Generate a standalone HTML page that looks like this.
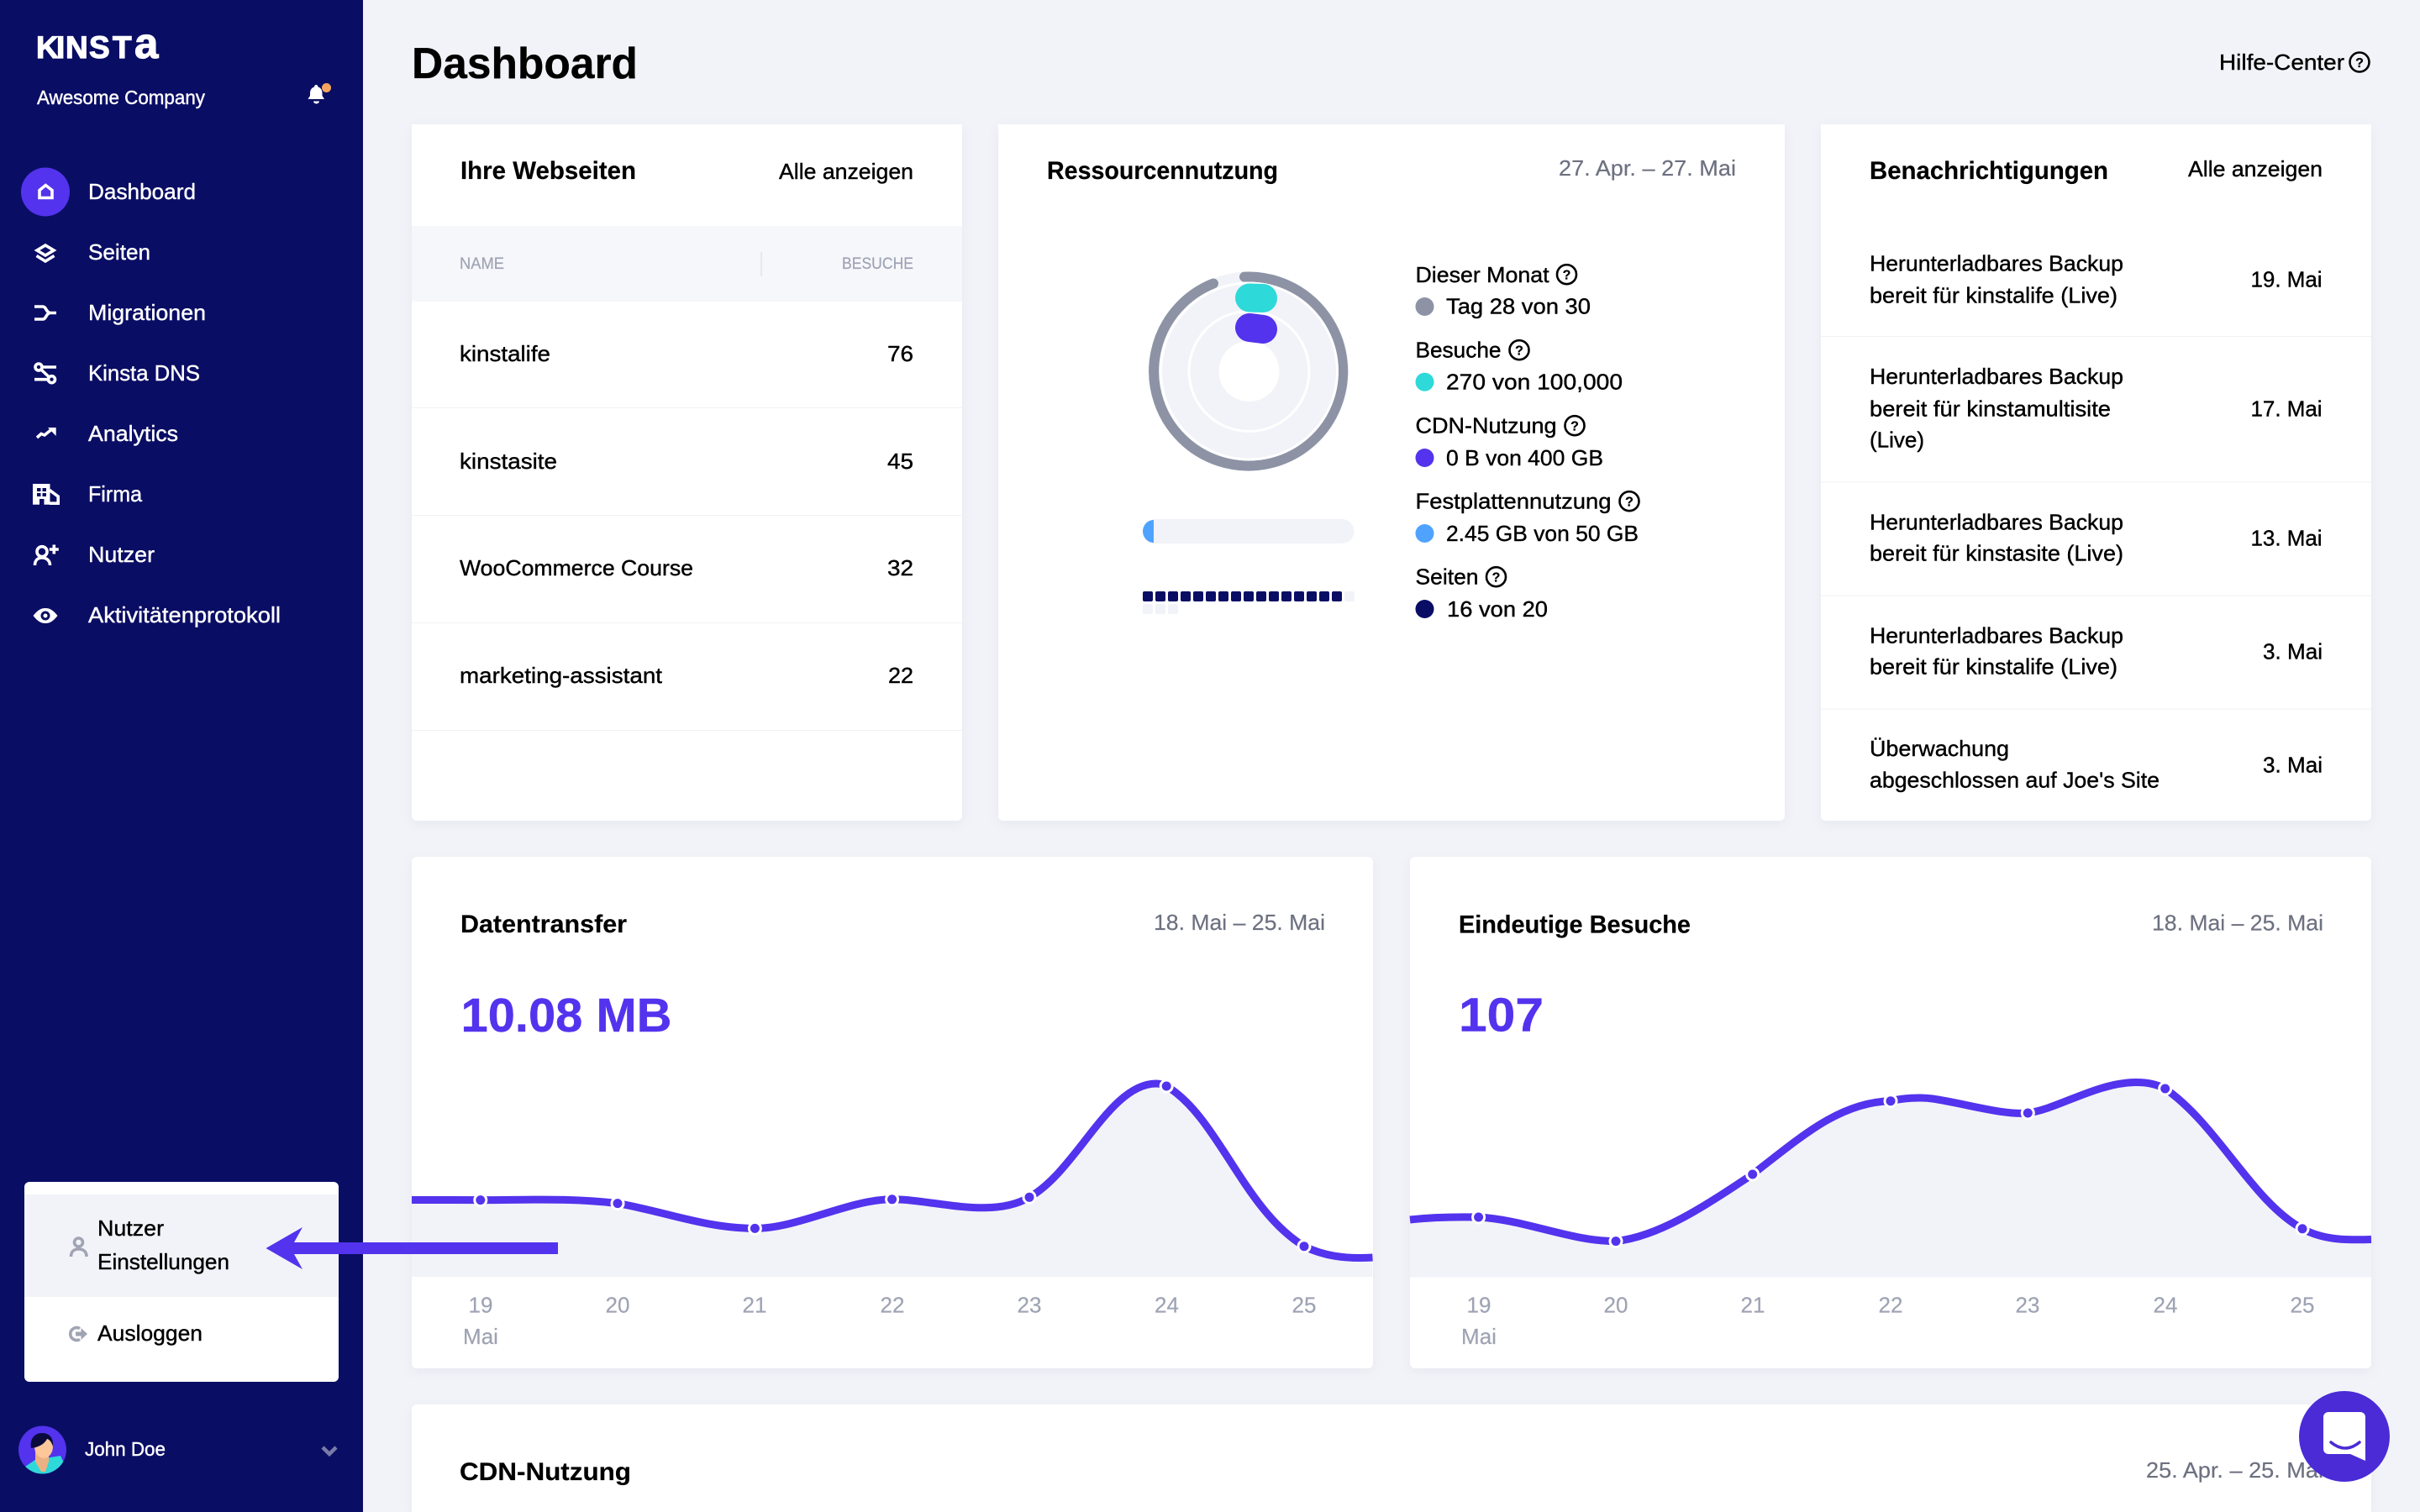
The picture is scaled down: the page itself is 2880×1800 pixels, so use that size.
<!DOCTYPE html>
<html lang="de">
<head>
<meta charset="utf-8">
<title>Kinsta Dashboard</title>
<style>
html,body{margin:0;padding:0;width:2880px;height:1800px;overflow:hidden;background:#f2f3f8;font-family:"Liberation Sans",sans-serif}
.page{position:relative;width:2880px;height:1800px;overflow:hidden;background:#f2f3f8}
.side{position:absolute;left:0;top:0;width:432px;height:1800px;background:#0a0d64}
.card{position:absolute;background:#fff;box-shadow:0 4px 14px rgba(110,120,170,.08)}
svg{position:absolute;left:0;top:0;display:block}
text{font-family:"Liberation Sans",sans-serif;font-size:26px;fill:#000;stroke:#000;stroke-width:.4}
.w{fill:#fff;stroke:#fff}
.h{font-weight:bold;font-size:30px;stroke-width:.2}
.d{fill:#6d7180;stroke:#6d7180;stroke-width:.2}
.l{fill:#9ea3b3;stroke:#9ea3b3;stroke-width:.2;text-anchor:middle}
.c{fill:#5333ed;stroke:#5333ed;font-weight:bold;font-size:57px}
.s{font-size:19px;fill:#9ea3b3;stroke:#9ea3b3;stroke-width:.2}
.q{font-size:16px;font-weight:bold;text-anchor:middle;stroke-width:.2}
.qc{fill:none;stroke:#000;stroke-width:2.6}
.i{fill:none;stroke:#fff;stroke-width:3.600}
.ln{fill:none;stroke:#5333ed;stroke-width:9}
.pt{fill:#5333ed;stroke:#fff;stroke-width:3}
</style>
</head>
<body>
<div class="page">
<div class="side"></div>
<div class="card" style="left:490px;top:148px;width:655px;height:829px;border-radius:0 0 6px 6px"></div>
<div class="card" style="left:1188px;top:148px;width:936px;height:829px;border-radius:0 0 6px 6px"></div>
<div class="card" style="left:2167px;top:148px;width:655px;height:829px;border-radius:0 0 6px 6px"></div>
<div class="card" style="left:490px;top:1020px;width:1144px;height:609px;border-radius:6px"></div>
<div class="card" style="left:1678px;top:1020px;width:1144px;height:609px;border-radius:6px"></div>
<div class="card" style="left:490px;top:1672px;width:2332px;height:128px;border-radius:6px 6px 0 0"></div>

<svg width="2880" height="1800" viewBox="0 0 2880 1800" xmlns="http://www.w3.org/2000/svg">
<!-- logo -->
<text class="w" y="69" x="43 67 78 106 134" style="font-size:37px;font-weight:bold;stroke-width:1.2">KINST<tspan x="160" style="font-size:51px">a</tspan></text>
<text class="w" x="44" y="124" textLength="200" lengthAdjust="spacingAndGlyphs" style="font-size:23px">Awesome Company</text>
<!-- bell -->
<path fill="#fff" d="M376.5,101c-1.5,0-2.5,1-2.5,2.5c-3.5,1-5,4-5,7.5v3l-2.500,4h19.500l-2.500,-4v-3c0,-3.500-1.500,-6.500-5,-7.500c0,-1.500-1,-2.500-2.500,-2.500z"/>
<path fill="#fff" d="M373,120.500a3.500,3 0 0 0 7,0z"/>
<circle cx="388.500" cy="104.500" r="5.500" fill="#f6a55e"/>
<!-- nav -->
<circle cx="54" cy="228.500" r="29" fill="#5333ed"/>
<path class="i" d="M47,235.500V226.500L54.300,220.500L62,226.500V235.500Z"/>
<path class="i" d="M44,298L54,292L64,298L54,304Z"/>
<path class="i" d="M43.500,304.500L54,311L64.500,304.500"/>
<path class="i" d="M41,365H51C55,365 55,372.500 60,372.500H67M60,372.500C55,372.500 55,380 51,380H41"/>
<circle class="i" cx="46" cy="437" r="4"/><circle class="i" cx="61.500" cy="451.700" r="4"/>
<path class="i" d="M51,437H67M41,451.700H57.500M49,440L58.500,449"/>
<path class="i" d="M44,521L49,516.500L53,518L61,511.500"/>
<path fill="#fff" d="M57,509H66.700V519Z"/>
<rect x="39" y="576" width="20.500" height="24.700" fill="#fff"/>
<path fill="#0a0d64" d="M44,581h4.500v4h-4.500zM50.500,581h4.500v4h-4.500zM44,587h4.500v4h-4.500zM50.500,587h4.500v4h-4.500zM47,594h5.500v7h-5.500z"/>
<path class="i" d="M59,583.500L69.200,591V599.200H59"/>
<circle class="i" cx="50" cy="656.700" r="6"/>
<path class="i" d="M41.500,673C41.500,667 45,664 50,664S59.500,667 59.500,673"/>
<path class="i" d="M64.300,648.500V659.500M58.800,654H69.800"/>
<path fill="#fff" d="M39.500,733C45,726 49,724 54,724S63,726 68.500,733C63,740 59,742 54,742S45,740 39.500,733Z"/>
<circle cx="54" cy="733" r="5.500" fill="#0a0d64"/><circle cx="54" cy="733" r="2.500" fill="#fff"/>
<text class="w" x="105" y="237" textLength="128" lengthAdjust="spacingAndGlyphs">Dashboard</text>
<text class="w" x="105" y="309" textLength="74" lengthAdjust="spacingAndGlyphs">Seiten</text>
<text class="w" x="105" y="381" textLength="140" lengthAdjust="spacingAndGlyphs">Migrationen</text>
<text class="w" x="105" y="453" textLength="133" lengthAdjust="spacingAndGlyphs">Kinsta DNS</text>
<text class="w" x="105" y="525" textLength="107" lengthAdjust="spacingAndGlyphs">Analytics</text>
<text class="w" x="105" y="597" textLength="64" lengthAdjust="spacingAndGlyphs">Firma</text>
<text class="w" x="105" y="669" textLength="79" lengthAdjust="spacingAndGlyphs">Nutzer</text>
<text class="w" x="105" y="741" textLength="229" lengthAdjust="spacingAndGlyphs">Aktivitätenprotokoll</text>

<!-- popup -->
<rect x="29" y="1407" width="374" height="238" rx="6" fill="#fff"/>
<rect x="29" y="1422" width="374" height="122" fill="#f2f3f8"/>
<circle cx="93.500" cy="1479" r="5" fill="none" stroke="#a0a4b3" stroke-width="3.600"/>
<path fill="none" stroke="#a0a4b3" stroke-width="3.600" d="M84.500,1496C84.500,1490 88,1487 93.500,1487S103,1490 103,1496"/>
<path fill="none" stroke="#a0a4b3" stroke-width="3.600" d="M95,1581.500A7.500,7.500 0 1 0 95,1594.500"/>
<path fill="#a0a4b3" d="M90,1585.500H96.500V1581L104,1588L96.500,1595V1590.500H90Z"/>
<text x="116" y="1471" textLength="79" lengthAdjust="spacingAndGlyphs">Nutzer</text>
<text x="116" y="1511" textLength="157" lengthAdjust="spacingAndGlyphs">Einstellungen</text>
<text x="116" y="1596" textLength="125" lengthAdjust="spacingAndGlyphs">Ausloggen</text>

<!-- user -->
<defs><clipPath id="av"><circle cx="50.500" cy="1726" r="28.500"/></clipPath></defs>
<circle cx="50.500" cy="1726" r="28.500" fill="#5333ed"/>
<g clip-path="url(#av)">
<path fill="#2ed9d9" d="M30,1746L46,1735H60L72,1733L80,1750V1760H30Z"/>
<path fill="#ecb183" d="M42,1726H58V1740L54,1752H49L42,1740Z"/>
<ellipse cx="52" cy="1722" rx="11" ry="14" fill="#fdc79a"/>
<path fill="#0a0a3c" d="M37,1724C35,1712 42,1706 50,1706C59,1706 64,1712 63,1722C61,1716 59,1714 56,1713C53,1719 46,1723 37,1724Z"/>
</g>
<text class="w" x="101" y="1733" textLength="96" lengthAdjust="spacingAndGlyphs" style="font-size:23px">John Doe</text>
<path fill="none" stroke="#7a7ba8" stroke-width="4.500" d="M384,1723L392,1731L400,1723"/>

<!-- header -->
<text x="490" y="93" textLength="269" lengthAdjust="spacingAndGlyphs" style="font-size:52px;font-weight:bold;stroke-width:.3">Dashboard</text>
<text x="2641" y="83" textLength="149" lengthAdjust="spacingAndGlyphs">Hilfe-Center</text>
<circle class="qc" cx="2808" cy="74" r="11.500"/><text class="q" x="2808" y="80">?</text>

<!-- card 1 -->
<text class="h" x="548" y="213" textLength="209" lengthAdjust="spacingAndGlyphs">Ihre Webseiten</text>
<text x="927" y="213" textLength="160" lengthAdjust="spacingAndGlyphs">Alle anzeigen</text>
<rect x="490" y="269" width="655" height="90" fill="#f6f7fb"/>
<text class="s" x="547" y="320" textLength="53" lengthAdjust="spacingAndGlyphs">NAME</text>
<text class="s" x="1002" y="320" textLength="85" lengthAdjust="spacingAndGlyphs">BESUCHE</text>
<rect x="905" y="300" width="2" height="29" fill="#e6e8ef"/>
<text x="547" y="430" textLength="108" lengthAdjust="spacingAndGlyphs">kinstalife</text>
<text x="1056" y="430" textLength="31" lengthAdjust="spacingAndGlyphs">76</text>
<rect x="490" y="485" width="655" height="1" fill="#f1f2f6"/>
<text x="547" y="558" textLength="116" lengthAdjust="spacingAndGlyphs">kinstasite</text>
<text x="1056" y="558" textLength="31" lengthAdjust="spacingAndGlyphs">45</text>
<rect x="490" y="613" width="655" height="1" fill="#f1f2f6"/>
<text x="547" y="685" textLength="278" lengthAdjust="spacingAndGlyphs">WooCommerce Course</text>
<text x="1056" y="685" textLength="31" lengthAdjust="spacingAndGlyphs">32</text>
<rect x="490" y="741" width="655" height="1" fill="#f1f2f6"/>
<text x="547" y="813" textLength="241" lengthAdjust="spacingAndGlyphs">marketing-assistant</text>
<text x="1057" y="813" textLength="30" lengthAdjust="spacingAndGlyphs">22</text>
<rect x="490" y="869" width="655" height="1" fill="#f1f2f6"/>

<!-- card 2 -->
<text class="h" x="1246" y="213" textLength="275" lengthAdjust="spacingAndGlyphs">Ressourcennutzung</text>
<text class="d" x="1855" y="209" textLength="211" lengthAdjust="spacingAndGlyphs">27. Apr. – 27. Mai</text>
<circle cx="1486.500" cy="442" r="112.500" fill="none" stroke="#f2f3f8" stroke-width="12"/>
<path fill="none" stroke="#8d93a5" stroke-width="12" stroke-linecap="round" d="M1481,329.600A112.500,112.500 0 1 1 1444,337.500"/>
<circle cx="1486.500" cy="442" r="105" fill="#f2f3f8" stroke="#fff" stroke-width="3"/>
<circle cx="1486.500" cy="442" r="71.500" fill="none" stroke="#fff" stroke-width="3"/>
<circle cx="1486.500" cy="442" r="36" fill="#fff"/>
<path fill="none" stroke="#2ed9d9" stroke-width="34" stroke-linecap="round" d="M1487,354.500L1503,355"/>
<path fill="none" stroke="#5333ed" stroke-width="34" stroke-linecap="round" d="M1487,390L1503,392"/>
<rect x="1360" y="618" width="251.500" height="29" rx="14.500" fill="#f2f3f8"/>
<path fill="#4fa3ff" d="M1373,619C1365,619 1360,626 1360,632.500S1365,646 1373,646Z"/>
<g fill="#0a0d64">
<rect x="1360" y="704" width="12" height="12" rx="2"/><rect x="1375" y="704" width="12" height="12" rx="2"/><rect x="1390" y="704" width="12" height="12" rx="2"/><rect x="1405" y="704" width="12" height="12" rx="2"/><rect x="1420" y="704" width="12" height="12" rx="2"/><rect x="1435" y="704" width="12" height="12" rx="2"/><rect x="1450" y="704" width="12" height="12" rx="2"/><rect x="1465" y="704" width="12" height="12" rx="2"/><rect x="1480" y="704" width="12" height="12" rx="2"/><rect x="1495" y="704" width="12" height="12" rx="2"/><rect x="1510" y="704" width="12" height="12" rx="2"/><rect x="1525" y="704" width="12" height="12" rx="2"/><rect x="1540" y="704" width="12" height="12" rx="2"/><rect x="1555" y="704" width="12" height="12" rx="2"/><rect x="1570" y="704" width="12" height="12" rx="2"/><rect x="1585" y="704" width="12" height="12" rx="2"/>
</g>
<g fill="#f2f3f8">
<rect x="1600" y="704" width="12" height="12" rx="2"/><rect x="1360" y="719" width="12" height="12" rx="2"/><rect x="1375" y="719" width="12" height="12" rx="2"/><rect x="1390" y="719" width="12" height="12" rx="2"/>
</g>

<text x="1684.500" y="336" textLength="159" lengthAdjust="spacingAndGlyphs">Dieser Monat</text>
<circle class="qc" cx="1864.500" cy="326.700" r="11.500"/><text class="q" x="1864.500" y="332.500">?</text>
<circle cx="1695.500" cy="365" r="11" fill="#8d93a5"/>
<text x="1721" y="373.500" textLength="172" lengthAdjust="spacingAndGlyphs">Tag 28 von 30</text>
<text x="1684.500" y="425.700" textLength="102" lengthAdjust="spacingAndGlyphs">Besuche</text>
<circle class="qc" cx="1808" cy="416.700" r="11.500"/><text class="q" x="1808" y="422.500">?</text>
<circle cx="1695.500" cy="454.700" r="11" fill="#2ed9d9"/>
<text x="1721" y="463.700" textLength="210" lengthAdjust="spacingAndGlyphs">270 von 100,000</text>
<text x="1684.500" y="515.700" textLength="168" lengthAdjust="spacingAndGlyphs">CDN-Nutzung</text>
<circle class="qc" cx="1874" cy="506.700" r="11.500"/><text class="q" x="1874" y="512.500">?</text>
<circle cx="1695.500" cy="545" r="11" fill="#5333ed"/>
<text x="1721" y="554" textLength="187" lengthAdjust="spacingAndGlyphs">0 B von 400 GB</text>
<text x="1684.500" y="605.700" textLength="233" lengthAdjust="spacingAndGlyphs">Festplattennutzung</text>
<circle class="qc" cx="1939" cy="596.700" r="11.500"/><text class="q" x="1939" y="602.500">?</text>
<circle cx="1695.500" cy="635" r="11" fill="#4fa3ff"/>
<text x="1721" y="644" textLength="229" lengthAdjust="spacingAndGlyphs">2.45 GB von 50 GB</text>
<text x="1684.500" y="695.700" textLength="75" lengthAdjust="spacingAndGlyphs">Seiten</text>
<circle class="qc" cx="1780.500" cy="686.700" r="11.500"/><text class="q" x="1780.500" y="692.500">?</text>
<circle cx="1695.500" cy="725" r="11" fill="#0a0d64"/>
<text x="1722" y="734" textLength="120" lengthAdjust="spacingAndGlyphs">16 von 20</text>

<!-- card 3 -->
<text class="h" x="2225" y="213" textLength="284" lengthAdjust="spacingAndGlyphs">Benachrichtigungen</text>
<text x="2604" y="210" textLength="160" lengthAdjust="spacingAndGlyphs">Alle anzeigen</text>
<text x="2225" y="322.500" textLength="302" lengthAdjust="spacingAndGlyphs">Herunterladbares Backup</text>
<text x="2225" y="360.500" textLength="295" lengthAdjust="spacingAndGlyphs">bereit für kinstalife (Live)</text>
<text x="2678.500" y="341.500" textLength="85" lengthAdjust="spacingAndGlyphs">19. Mai</text>
<rect x="2167" y="400" width="655" height="1" fill="#f1f2f6"/>
<text x="2225" y="457" textLength="302" lengthAdjust="spacingAndGlyphs">Herunterladbares Backup</text>
<text x="2225" y="495.500" textLength="287" lengthAdjust="spacingAndGlyphs">bereit für kinstamultisite</text>
<text x="2225" y="532.500" textLength="65" lengthAdjust="spacingAndGlyphs">(Live)</text>
<text x="2678.500" y="495.500" textLength="85" lengthAdjust="spacingAndGlyphs">17. Mai</text>
<rect x="2167" y="573.500" width="655" height="1" fill="#f1f2f6"/>
<text x="2225" y="630.500" textLength="302" lengthAdjust="spacingAndGlyphs">Herunterladbares Backup</text>
<text x="2225" y="667.500" textLength="302" lengthAdjust="spacingAndGlyphs">bereit für kinstasite (Live)</text>
<text x="2678.500" y="649.500" textLength="85" lengthAdjust="spacingAndGlyphs">13. Mai</text>
<rect x="2167" y="708.500" width="655" height="1" fill="#f1f2f6"/>
<text x="2225" y="765.500" textLength="302" lengthAdjust="spacingAndGlyphs">Herunterladbares Backup</text>
<text x="2225" y="802.500" textLength="295" lengthAdjust="spacingAndGlyphs">bereit für kinstalife (Live)</text>
<text x="2693" y="784.500" textLength="71" lengthAdjust="spacingAndGlyphs">3. Mai</text>
<rect x="2167" y="843.500" width="655" height="1" fill="#f1f2f6"/>
<text x="2225" y="900" textLength="166" lengthAdjust="spacingAndGlyphs">Überwachung</text>
<text x="2225" y="937.500" textLength="345" lengthAdjust="spacingAndGlyphs">abgeschlossen auf Joe's Site</text>
<text x="2693" y="919.500" textLength="71" lengthAdjust="spacingAndGlyphs">3. Mai</text>

<!-- chart 1 -->
<text class="h" x="548" y="1110" textLength="198" lengthAdjust="spacingAndGlyphs">Datentransfer</text>
<text class="d" x="1373" y="1107" textLength="204" lengthAdjust="spacingAndGlyphs">18. Mai – 25. Mai</text>
<text class="c" x="548.500" y="1228" textLength="251" lengthAdjust="spacingAndGlyphs">10.08 MB</text>
<path fill="#f2f3f8" d="M490,1428.500C530,1428.500 540,1428.600 571.800,1428.600C630,1428.600 680,1426 735,1432.600C790,1442 840,1462.400 898.400,1462.400C950,1462.400 1010,1428 1061.600,1427.800C1110,1427.600 1180,1452 1225,1425.300C1282,1393 1320,1290 1376,1290C1380,1290 1384,1291 1388.200,1293C1450,1330 1480,1440 1552,1483.700C1575,1495 1600,1499 1633.500,1497V1520H490Z"/>
<path class="ln" d="M490,1428.500C530,1428.500 540,1428.600 571.800,1428.600C630,1428.600 680,1426 735,1432.600C790,1442 840,1462.400 898.400,1462.400C950,1462.400 1010,1428 1061.600,1427.800C1110,1427.600 1180,1452 1225,1425.300C1282,1393 1320,1290 1376,1290C1380,1290 1384,1291 1388.200,1293C1450,1330 1480,1440 1552,1483.700C1575,1495 1600,1499 1633.500,1497"/>
<circle class="pt" cx="571.800" cy="1428.600" r="7"/><circle class="pt" cx="735" cy="1432.600" r="7"/><circle class="pt" cx="898.400" cy="1462.400" r="7"/><circle class="pt" cx="1061.600" cy="1427.800" r="7"/><circle class="pt" cx="1225" cy="1425.300" r="7"/><circle class="pt" cx="1388.200" cy="1293" r="7"/><circle class="pt" cx="1552" cy="1483.700" r="7"/>
<text class="l" x="572" y="1562.500">19</text><text class="l" x="572" y="1600">Mai</text>
<text class="l" x="735" y="1562.500">20</text><text class="l" x="898" y="1562.500">21</text><text class="l" x="1062" y="1562.500">22</text><text class="l" x="1225" y="1562.500">23</text><text class="l" x="1388.500" y="1562.500">24</text><text class="l" x="1552" y="1562.500">25</text>

<!-- chart 2 -->
<text class="h" x="1736" y="1110.500" textLength="276" lengthAdjust="spacingAndGlyphs">Eindeutige Besuche</text>
<text class="d" x="2561" y="1107.500" textLength="204" lengthAdjust="spacingAndGlyphs">18. Mai – 25. Mai</text>
<text class="c" x="1736" y="1227.500" textLength="101" lengthAdjust="spacingAndGlyphs">107</text>
<path fill="#f2f3f8" d="M1678,1452C1705,1449 1735,1448.500 1759.600,1449C1815,1452 1870,1478 1923,1477.600C1975,1472 2030,1435 2085.700,1398C2145,1352 2190,1312 2250,1310.700C2265,1307 2285,1306 2300,1308C2340,1314 2385,1328 2413.300,1325C2450,1320 2495,1288.500 2543,1288.500C2555,1288.500 2567,1291 2576.700,1296C2640,1340 2680,1430 2740,1462.800C2765,1476 2790,1476.500 2822,1475.500V1520.500H1678Z"/>
<path class="ln" d="M1678,1452C1705,1449 1735,1448.500 1759.600,1449C1815,1452 1870,1478 1923,1477.600C1975,1472 2030,1435 2085.700,1398C2145,1352 2190,1312 2250,1310.700C2265,1307 2285,1306 2300,1308C2340,1314 2385,1328 2413.300,1325C2450,1320 2495,1288.500 2543,1288.500C2555,1288.500 2567,1291 2576.700,1296C2640,1340 2680,1430 2740,1462.800C2765,1476 2790,1476.500 2822,1475.500"/>
<circle class="pt" cx="1759.600" cy="1449" r="7"/><circle class="pt" cx="1923" cy="1477.600" r="7"/><circle class="pt" cx="2085.700" cy="1398" r="7"/><circle class="pt" cx="2250" cy="1310.700" r="7"/><circle class="pt" cx="2413.300" cy="1325" r="7"/><circle class="pt" cx="2576.700" cy="1296" r="7"/><circle class="pt" cx="2740" cy="1462.800" r="7"/>
<text class="l" x="1760" y="1562.500">19</text><text class="l" x="1760" y="1600">Mai</text>
<text class="l" x="1923" y="1562.500">20</text><text class="l" x="2086" y="1562.500">21</text><text class="l" x="2250" y="1562.500">22</text><text class="l" x="2413" y="1562.500">23</text><text class="l" x="2577" y="1562.500">24</text><text class="l" x="2740" y="1562.500">25</text>

<!-- row 3 -->
<text class="h" x="547" y="1762" textLength="204" lengthAdjust="spacingAndGlyphs">CDN-Nutzung</text>
<text class="d" x="2554" y="1759" textLength="211" lengthAdjust="spacingAndGlyphs">25. Apr. – 25. Mai</text>

<!-- arrow -->
<polygon fill="#5333ed" points="316.500,1486 360,1461 350,1479 664,1479 664,1493 350,1493 360,1511"/>

<!-- chat -->
<circle cx="2790" cy="1710" r="54" fill="#4a2bd6"/>
<path fill="#fff" d="M2771,1681H2809a6,6 0 0 1 6,6V1739L2797,1731H2771a6,6 0 0 1 -6,-6V1687a6,6 0 0 1 6,-6Z"/>
<path fill="none" stroke="#4a2bd6" stroke-width="3.500" stroke-linecap="round" d="M2774,1717Q2791,1731 2808,1717"/>
</svg>
</div>
</body>
</html>
